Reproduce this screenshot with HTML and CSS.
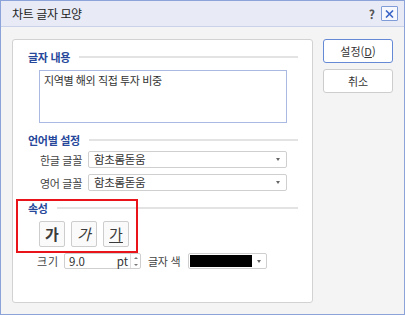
FILE: index.html
```html
<!DOCTYPE html>
<html lang="ko">
<head>
    <meta charset="UTF-8">
    <title>차트 글자 모양</title>
    <link rel="stylesheet" href="styles.css">
</head>
<body>
    <div class="dialog">
        <div class="titlebar">
            <span class="title">차트 글자 모양</span>
            <div class="title-btns">
                <span class="help">?</span>
                <span class="close">
                    <svg width="9" height="8" viewBox="0 0 9 8"><path d="M1 0.5 L8 7.5 M8 0.5 L1 7.5" stroke="#3a64c6" stroke-width="1.6" fill="none"/></svg>
                </span>
            </div>
        </div>

        <div class="content">
            <div class="panel">
                <div class="group-title"><span>글자 내용</span></div>
                <div class="textbox">지역별 해외 직접 투자 비중</div>

                <div class="group-title gap-top"><span>언어별 설정</span></div>
                <div class="field-row">
                    <label>한글 글꼴</label>
                    <div class="select">함초롬돋움<span class="caret"></span></div>
                </div>
                <div class="field-row second">
                    <label>영어 글꼴</label>
                    <div class="select">함초롬돋움<span class="caret"></span></div>
                </div>

                <div class="group-title gap-top"><span>속성</span></div>
                <div class="style-btns">
                    <button class="style-btn bold">가</button>
                    <button class="style-btn italic">가</button>
                    <button class="style-btn underline">가</button>
                </div>

                <div class="size-row">
                    <span class="size-label">크기</span>
                    <div class="spin-input">
                        <span class="value">9.0</span>
                        <span class="unit">pt</span>
                        <span class="spinner">
                            <span class="up"></span>
                            <span class="down"></span>
                        </span>
                    </div>
                    <span class="color-label">글자 색</span>
                    <div class="color-pick">
                        <span class="swatch"></span>
                        <span class="caret"></span>
                    </div>
                </div>

                <!-- annotation box -->
                <div class="highlight"></div>
            </div>

            <div class="side-btns">
                <button class="btn primary">설정(<u>D</u>)</button>
                <button class="btn">취소</button>
            </div>
        </div>
    </div>
</body>
</html>
```

FILE: styles.css
```css
* {
    box-sizing: border-box;
}

html, body {
    margin: 0;
    padding: 0;
}

body {
    font-family: "Noto Sans CJK KR", "Noto Sans", sans-serif;
    font-size: 11px;
    color: #333;
    background: #fff;
}

.dialog {
    width: 405px;
    height: 315px;
    border: 1px solid #8ca3da;
    background: #f4f4f4;
    display: flex;
    flex-direction: column;
}

/* TITLE BAR */
.titlebar {
    height: 26px;
    flex: none;
    background: #e8ebf6;
    border-bottom: 1px solid #c9d2ea;
    display: flex;
    align-items: center;
    justify-content: space-between;
    padding: 0 6px 0 11px;
}

.title {
    font-size: 12px;
    color: #222;
    letter-spacing: -0.4px;
}

.title-btns {
    display: flex;
    align-items: center;
    gap: 6px;
}

.help {
    font-size: 12px;
    font-weight: 700;
    color: #555;
}

.close {
    width: 17px;
    height: 15px;
    border: 1px solid #7f9cd9;
    border-radius: 1px;
    background: #f6f8fd;
    display: flex;
    align-items: center;
    justify-content: center;
}

/* CONTENT */
.content {
    display: flex;
    gap: 10px;
    padding: 12px 0 0 11px;
}

.panel {
    position: relative;
    width: 301px;
    height: 264px;
    background: #fff;
    border: 1px solid #d2d2d2;
    border-radius: 3px;
    padding: 9px 14px 0 15px;
}

.group-title {
    display: flex;
    align-items: center;
    gap: 9px;
    height: 16px;
    color: #27489a;
    font-weight: 700;
    letter-spacing: -0.3px;
}

.group-title::after {
    content: "";
    flex: 1;
    height: 2px;
    background: #e3e3e3;
}

.gap-top {
    margin-top: 9px;
}

.textbox {
    margin: 5px 0 0 11px;
    width: 248px;
    height: 53px;
    border: 1px solid #a9b9e1;
    padding: 1px 4px;
    line-height: 16px;
    letter-spacing: -0.4px;
}

.field-row {
    display: flex;
    align-items: center;
    gap: 6px;
    margin-top: 3px;
}

.field-row.second {
    margin-top: 6px;
}

.field-row label {
    width: 54px;
    text-align: right;
    letter-spacing: -0.3px;
    color: #444;
}

.select {
    position: relative;
    width: 199px;
    height: 17px;
    border: 1px solid #cfcfcf;
    border-radius: 2px;
    padding: 0 5px;
    line-height: 15px;
    font-size: 11.5px;
    letter-spacing: -0.3px;
}

.caret {
    position: absolute;
    right: 6px;
    top: 6px;
    border-left: 2.5px solid transparent;
    border-right: 2.5px solid transparent;
    border-top: 3px solid #666;
}

.style-btns {
    display: flex;
    gap: 6px;
    margin: 5px 0 0 11px;
}

.style-btn {
    width: 26px;
    height: 26px;
    padding: 0;
    border: 1px solid #cdcdcd;
    border-radius: 2px;
    background: #fafafa;
    font-family: inherit;
    font-size: 15px;
    line-height: 22px;
    color: #3a3a3a;
}

.style-btn.bold {
    font-weight: 700;
}

.style-btn.italic {
    font-style: italic;
}

.style-btn.underline {
    text-decoration: underline;
    text-underline-offset: 2px;
}

.size-row {
    display: flex;
    align-items: center;
    margin-top: 6px;
    height: 16px;
}

.size-label {
    margin-left: 9px;
    width: 27px;
    color: #444;
    letter-spacing: 1px;
}

.spin-input {
    display: flex;
    align-items: center;
    width: 77px;
    height: 16px;
    border: 1px solid #cfcfcf;
    border-radius: 2px;
    padding-left: 4px;
    font-size: 11.5px;
}

.spin-input .value {
    flex: 1;
}

.spin-input .unit {
    margin-right: 2px;
}

.spinner {
    width: 10px;
    height: 100%;
    border-left: 1px solid #ddd;
    display: flex;
    flex-direction: column;
    align-items: center;
    justify-content: space-around;
}

.spinner .up {
    border-left: 2px solid transparent;
    border-right: 2px solid transparent;
    border-bottom: 2.5px solid #777;
}

.spinner .down {
    border-left: 2px solid transparent;
    border-right: 2px solid transparent;
    border-top: 2.5px solid #777;
}

.color-label {
    margin-left: 7px;
    width: 40px;
    color: #444;
    letter-spacing: -0.3px;
}

.color-pick {
    position: relative;
    width: 79px;
    height: 16px;
    border: 1px solid #cfcfcf;
    border-radius: 2px;
    padding: 1px;
}

.swatch {
    display: block;
    width: 62px;
    height: 12px;
    background: #000;
}

.color-pick .caret {
    top: 6px;
    right: 5px;
}

.highlight {
    position: absolute;
    left: 3px;
    top: 159px;
    width: 122px;
    height: 54px;
    border: 2px solid #e8141a;
}

/* SIDE BUTTONS */
.side-btns {
    display: flex;
    flex-direction: column;
    gap: 6px;
}

.btn {
    width: 70px;
    height: 24px;
    border: 1px solid #cdcdcd;
    border-radius: 3px;
    background: #fff;
    font-family: inherit;
    font-size: 11px;
    color: #333;
    padding: 0;
}

.btn.primary {
    border: 1.5px solid #6689d6;
}
```
